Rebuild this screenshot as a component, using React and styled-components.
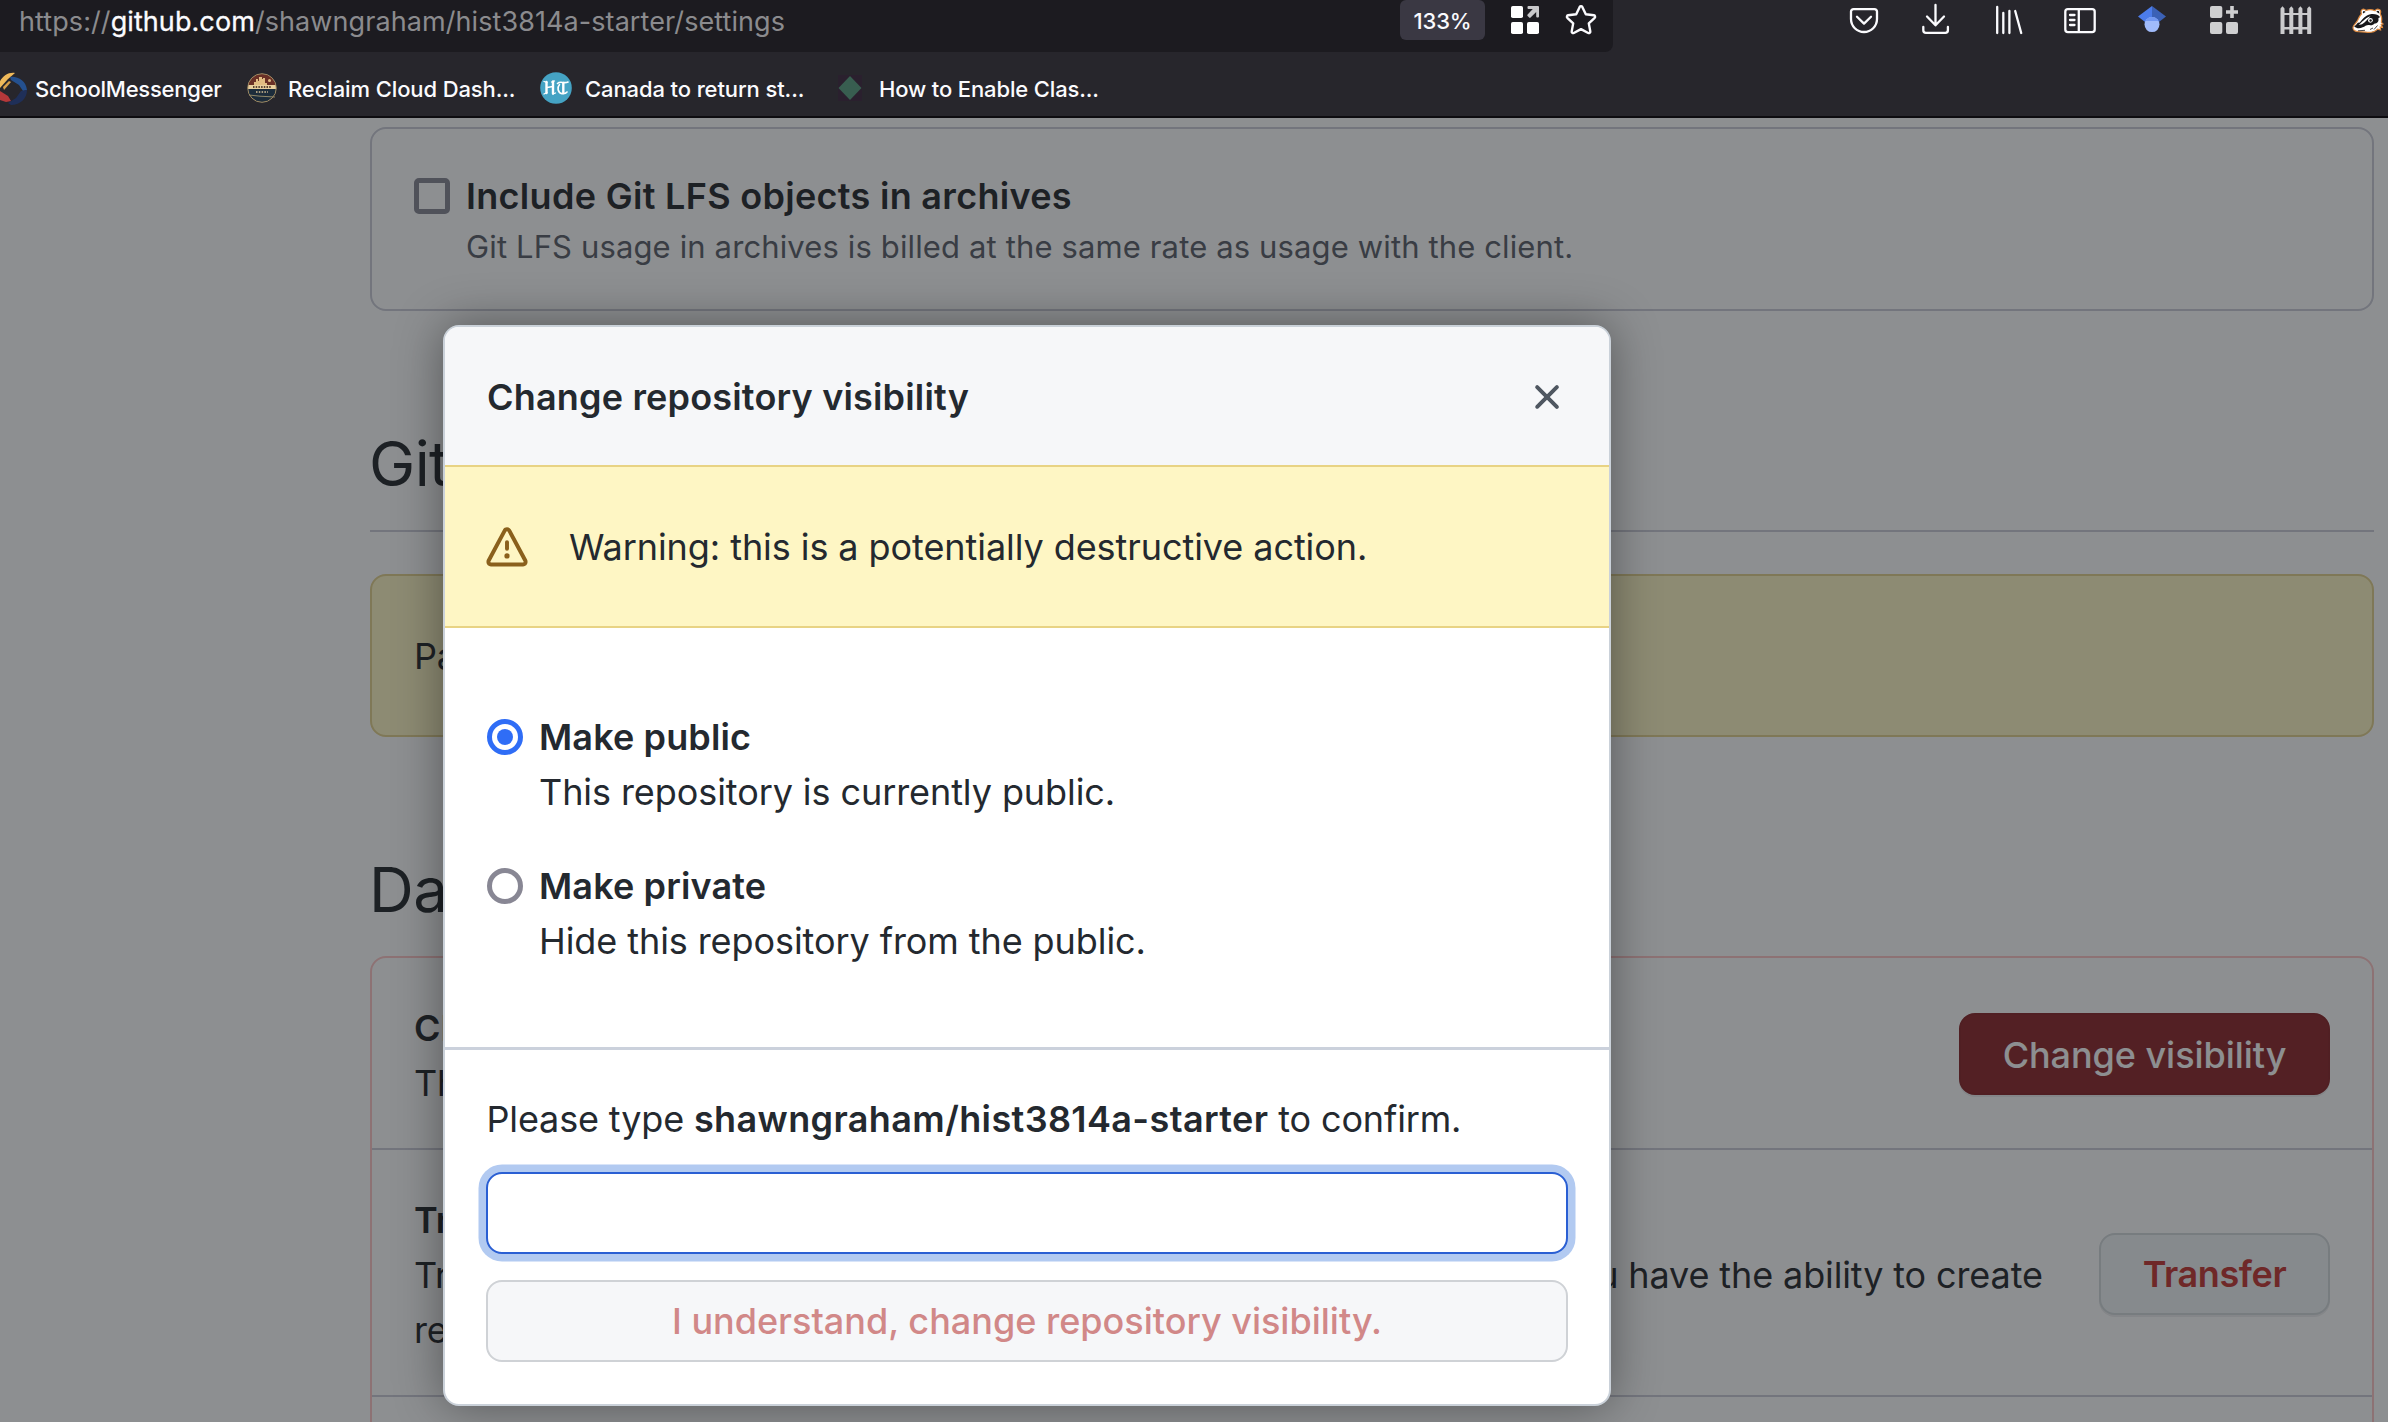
import React from 'react';
import styled, { createGlobalStyle } from 'styled-components';

const GlobalStyle = createGlobalStyle`
  *, *::before, *::after { box-sizing: border-box; }
  html, body { margin: 0; padding: 0; }
  body {
    width: 2388px;
    height: 1422px;
    overflow: hidden;
    background: #fff;
    color: #24292f;
    font-family: Inter, "Liberation Sans", sans-serif;
    font-size: 36px;
    line-height: 55px;
    letter-spacing: -0.1px;
  }
`;

const Window = styled.div`
  display: flex;
  flex-direction: column;
  width: 2388px;
  height: 1422px;
  overflow: hidden;
`;

/* ---------- browser chrome ---------- */

const Chrome = styled.header`
  flex: 0 0 118px;
  display: flex;
  flex-direction: column;
  background: #27262c;
  border-bottom: 2px solid #0d0c10;
  overflow: hidden;
`;

const Toolbar = styled.div`
  flex: 0 0 52px;
  display: flex;
`;

const AddressBar = styled.div`
  flex: 0 0 1613px;
  display: flex;
  align-items: flex-start;
  padding: 0 14px 0 19px;
  background: #1c1b20;
  border-bottom-right-radius: 8px;
`;

const Url = styled.span`
  flex: 1;
  color: #8b8b8e;
  font-size: 27px;
  line-height: 43px;
  letter-spacing: 0.08px;
  white-space: nowrap;
`;

const Domain = styled.span`
  color: #fbfbfe;
  -webkit-text-stroke: 0.3px #fbfbfe;
`;

const ZoomBadge = styled.span`
  width: 85px;
  height: 40px;
  padding-top: 1px;
  border-radius: 6px;
  background: #3a3843;
  color: #fbfbfe;
  font-size: 22px;
  font-weight: 500;
  line-height: 40px;
  text-align: center;
`;

const BarIcon = styled.svg`
  display: block;
  width: 36px;
  height: 40px;
  margin-left: ${(p) => p.$left || 0}px;
`;

const Extensions = styled.div`
  display: flex;
  margin-left: 215px;
`;

const Slot = styled.div`
  flex: 0 0 72px;
  display: flex;
  justify-content: center;
`;

const Bookmarks = styled.nav`
  flex: 1;
  display: grid;
  grid-template-columns: 250px 294px 298px 280px;
  align-items: center;
  margin-left: -4px;
  padding-top: 8px;
`;

const Bookmark = styled.a`
  display: flex;
  align-items: center;
  gap: ${(p) => p.$gap}px;
  color: #fbfbfe;
  font-size: 22px;
  font-weight: 500;
  line-height: 33px;
  letter-spacing: ${(p) => p.$track || -0.11}px;
  white-space: nowrap;
`;

const BookmarkLabel = styled.span`
  padding-top: 2px;
`;

const Favicon = styled.svg`
  flex: none;
  display: block;
`;

/* ---------- settings page ---------- */

const Page = styled.div`
  position: relative;
  flex: 1;
  overflow: hidden;
`;

const Content = styled.main`
  display: flex;
  flex-direction: column;
  margin: 9px 14px 0 370px;
  color: #1f2226;
  letter-spacing: -0.125px;
`;

const OptionBox = styled.section`
  display: flex;
  gap: 16px;
  height: 184px;
  padding: 39px 42px 0;
  border: 2px solid #cacbd6;
  border-radius: 16px;
`;

const Checkbox = styled.input`
  appearance: none;
  flex: none;
  width: 36px;
  height: 36px;
  margin: 10px 0 0;
  border: 5px solid #858491;
  border-radius: 5px;
`;

const OptionTitle = styled.div`
  font-weight: 600;
  line-height: 56px;
  letter-spacing: 0.3px;
`;

const OptionNote = styled.div`
  color: #575a65;
  font-size: 31px;
  line-height: 45px;
  letter-spacing: 0.13px;
`;

const SectionTitle = styled.h2`
  margin: 106px 0 0;
  padding-bottom: 20px;
  border-bottom: ${(p) => (p.$ruled ? '2px solid #cacbd6' : 'none')};
  font-size: 62px;
  font-weight: 400;
  line-height: 93px;
  letter-spacing: -0.6px;
  text-indent: -1px;
`;

const Flash = styled.div`
  margin-top: 42px;
  padding: 53px 42px 51px;
  border: 2px solid #e3d08a;
  border-radius: 16px;
  background: #fef6c2;
`;

const DangerBox = styled.section`
  border: 2px solid #ffc5c4;
  border-radius: 16px;
`;

const DangerRow = styled.div`
  display: flex;
  align-items: center;
  gap: 40px;
  padding: 43px 42px 37px;
  border-bottom: 2px solid #cacbd6;
`;

const DangerText = styled.div`
  flex: 1;
`;

const Strong = styled.strong`
  display: block;
  font-weight: 600;
  letter-spacing: 0.13px;
`;

const RowButton = styled.button`
  flex: none;
  width: ${(p) => p.$width}px;
  height: 82px;
  margin: 0 0 4px;
  padding: 2px 0 0;
  border: 2px solid ${(p) => (p.$primary ? '#851f22' : '#d3d8db')};
  border-radius: 16px;
  background: ${(p) => (p.$primary ? '#8b2124' : '#f0f5f6')};
  box-shadow: 0 2px 0 rgba(27, 31, 36, 0.08);
  color: ${(p) => (p.$primary ? '#fff' : '#c2312d')};
  font: ${(p) => (p.$primary ? 500 : 600)} 36px/55px Inter, "Liberation Sans", sans-serif;
  letter-spacing: ${(p) => (p.$primary ? -0.05 : -0.4)}px;
`;

const Backdrop = styled.div`
  position: absolute;
  inset: 0;
  background: rgba(27, 31, 36, 0.5);
`;

/* ---------- dialog ---------- */

const Dialog = styled.div`
  position: absolute;
  top: 207px;
  left: 443px;
  display: flex;
  flex-direction: column;
  width: 1168px;
  height: 1081px;
  border: 2px solid #cad1d9;
  border-radius: 16px;
  background: #fff;
  box-shadow: 0 0 48px rgba(0, 0, 0, 0.4);
  overflow: hidden;
`;

const DialogHeader = styled.div`
  flex: 0 0 138px;
  display: flex;
  align-items: center;
  justify-content: space-between;
  padding: 2px 41px 0 42px;
  background: #f6f7f9;
`;

const DialogTitle = styled.h3`
  margin: 0;
  font-size: 36px;
  font-weight: 600;
  letter-spacing: 0.18px;
`;

const CloseButton = styled.button`
  display: flex;
  padding: 0;
  border: 0;
  background: none;
  color: #4f5761;
`;

const Octicon = styled.svg`
  flex: none;
  display: block;
  width: 42px;
  height: 42px;
  fill: currentColor;
`;

const Warning = styled.div`
  flex: 0 0 163px;
  display: flex;
  align-items: center;
  gap: 41px;
  padding: 2px 42px 0 41px;
  border: solid #e8d384;
  border-width: 2px 0;
  background: #fef6c4;
  letter-spacing: -0.07px;

  ${Octicon} {
    color: #8a601c;
  }
`;

const Choices = styled.div`
  flex: 1;
  display: flex;
  flex-direction: column;
  gap: 38px;
  padding: 81px 42px 0;
`;

const Choice = styled.label`
  display: flex;
  align-items: flex-start;
  gap: 16px;
`;

const ChoiceText = styled.div`
  padding-top: 1px;
  letter-spacing: -0.08px;
`;

const Radio = styled.input`
  appearance: none;
  flex: none;
  display: grid;
  place-items: center;
  width: 36px;
  height: 36px;
  margin: 10px 0 0;
  border: 5px solid #888794;
  border-radius: 50%;

  &:checked {
    border-color: #2f6df6;
  }
  &:checked::before {
    content: "";
    width: 16px;
    height: 16px;
    border-radius: 50%;
    background: #2f6df6;
  }
`;

const Confirm = styled.form`
  flex: 0 0 357px;
  display: flex;
  flex-direction: column;
  padding: 41px 41px 0;
  border-top: 3px solid #cbd1dc;
`;

const ConfirmLabel = styled.label`
  height: 81px;
  padding-top: 1px;
  text-indent: 0.5px;
  letter-spacing: -0.15px;

  b {
    font-weight: 600;
    letter-spacing: 0.38px;
  }
`;

const ConfirmInput = styled.input`
  height: 82px;
  padding: 0 20px;
  border: 2px solid #2a5fd3;
  border-radius: 16px;
  outline: none;
  background: #fff;
  box-shadow: 0 0 0 7.5px #b2caf1;
  font: 400 36px Inter, "Liberation Sans", sans-serif;
`;

const ConfirmButton = styled.button`
  height: 82px;
  margin-top: 26px;
  padding: 1px 0 0;
  border: 2px solid #cfd2d6;
  border-radius: 16px;
  background: #f6f7f9;
  color: #d18888;
  font: 500 36px/55px Inter, "Liberation Sans", sans-serif;
  letter-spacing: 0;
`;

/* ---------- icons ---------- */

const line = { fill: 'none', stroke: '#fbfbfe', strokeWidth: 2.3, strokeLinecap: 'round', strokeLinejoin: 'round' };

const QrGridIcon = () => (
  <BarIcon $left={22} viewBox="0 0 36 40">
    <rect x="4" y="6" width="12" height="12" rx="1.8" fill="#fff" />
    <rect x="4" y="22" width="12" height="12" rx="1.8" fill="#fff" />
    <rect x="20" y="22" width="12" height="12" rx="1.8" fill="#fff" />
    <path d="M21.500 6H31a1 1 0 0 1 1 1v9.500a1 1 0 0 1-1 1h-.8a1 1 0 0 1-1-1V12l-5.600 5.600a1 1 0 0 1-1.400 0l-1.600-1.600a1 1 0 0 1 0-1.400L25.800 9h-4.300a1 1 0 0 1-1-1V7a1 1 0 0 1 1-1z" fill="#c9c9cb" />
  </BarIcon>
);

const StarIcon = () => (
  <BarIcon $left={20} viewBox="0 0 36 40">
    <path
      {...line}
      strokeWidth="2.4"
      d="M16.7 6.9a1.5 1.5 0 0 1 2.6 0l3.5 7.3 8.1 1.1a1.5 1.5 0 0 1 .8 2.5l-5.9 5.6 1.5 8a1.5 1.5 0 0 1-2.1 1.6L18 29.1 10.8 33a1.5 1.5 0 0 1-2.1-1.6l1.5-8-5.9-5.6a1.5 1.5 0 0 1 .8-2.5l8.1-1.1z"
    />
  </BarIcon>
);

const PocketIcon = () => (
  <BarIcon viewBox="0 0 36 40">
    <path {...line} d="M7.5 9.1h21A2.5 2.5 0 0 1 31 11.6V19a13 13 0 0 1-26 0v-7.4a2.5 2.5 0 0 1 2.5-2.5z" />
    <path {...line} d="M11 16.8l7 6.8 7-6.8" />
  </BarIcon>
);

const DownloadIcon = () => (
  <BarIcon viewBox="0 0 36 40">
    <path {...line} d="M17.5 5v20M9 16.5l8.5 8.8 8.5-8.8" />
    <path {...line} d="M5.3 27v3.3a2.6 2.6 0 0 0 2.6 2.6h19.4a2.6 2.6 0 0 0 2.6-2.6V27" />
  </BarIcon>
);

const LibraryIcon = () => (
  <BarIcon viewBox="0 0 36 40">
    <path {...line} d="M7.2 7v26M13.3 13v20M19.4 11v22M25.2 11l6 22" />
  </BarIcon>
);

const SidebarIcon = () => (
  <BarIcon viewBox="0 0 36 40">
    <rect {...line} x="3.3" y="9.1" width="29.4" height="23" rx="2.6" />
    <path {...line} d="M16.8 9.5v22M8 15h4.5M8 20h4.5M8 25h4.5" />
  </BarIcon>
);

const ScholarIcon = () => (
  <BarIcon viewBox="0 0 36 40">
    <path d="M18 6L4 16.6l8 6.2 6-3.8z" fill="#4c7cea" />
    <path d="M18 6l14 10.6-8 6.2-6-3.8z" fill="#3b61b6" />
    <circle cx="18" cy="24.6" r="7.5" fill="#a0bbfb" />
    <path d="M11.4 21a7.5 7.5 0 0 1 13.2 0z" fill="#7398f1" />
  </BarIcon>
);

const AddTileIcon = () => (
  <BarIcon viewBox="0 0 36 40" fill="#cfcfd1">
    <rect x="4" y="6" width="12.3" height="12" rx="2" />
    <rect x="4" y="22" width="12.3" height="12" rx="2" />
    <rect x="20" y="22" width="12" height="12" rx="2" />
    <path d="M24.2 6h3.6v4.2H32v3.6h-4.2V18h-3.6v-4.2H20v-3.6h4.2z" />
  </BarIcon>
);

const FenceIcon = () => (
  <BarIcon viewBox="0 0 36 40" fill="#cbcbcd">
    <path d="M2.5 34V8.5l2-2.2 2 2.2V34zM11.3 34V8.5l2-2.2 2 2.2V34zM20.4 34V8.5l2-2.2 2 2.2V34zM29.2 34V8.5l2-2.2 2 2.2V34z" />
    <path d="M3 13h30v2H3zM3 27h30v2.4H3z" />
  </BarIcon>
);

const BadgerIcon = () => (
  <BarIcon viewBox="0 0 36 40">
    <path
      d="M11.500 14c-1.500-4 1.500-6.500 4.500-3.500 3-1.200 6-1 9 .2 2.500-3.200 7-1.200 5.200 3.100 1.400 2.400 1.800 5.500 1.200 8.500l1.600 1.600-1.800.6 1.200 3-2.200-.4.4 2.800-3-.8c-3 3-7.500 3.800-12 3l-7-.4c-3.600 0-6-1.800-5.600-4.600 1-2.800 3.600-4.400 5-7.400 1-2.200 1.700-4 3.500-5.700z"
      fill="#fff"
      stroke="#dd8a40"
      strokeWidth="1.200"
    />
    <path d="M13 13.500c-.6-2.600 1-3.400 2.600-1.400zM26.300 11.700c1.600-1.800 3.600-.8 2.800 1.700z" fill="#17171a" />
    <path d="M4.200 26.500c1.400-1 2.600-2.200 3.600-3.800l2-.2c2.600-3.600 5.600-7.200 10.600-8.300 4-.7 8 .4 9.800 3-1.600.2-2.200 1.200-1.600 2.800-.4 2.400-2 3.800-4 3.500-1.400 1.500-3.600 2.300-5.200 1.500-2.800-.4-4.400 1.400-6.800 2.300-2.200 1-5.400 1.800-8.400-.8z" fill="#17171a" />
    <path d="M8.500 25c3.600-2.800 6-6.700 12-8.800-3 3-4.800 5.900-8.500 8z" fill="#fff" />
    <circle cx="20.400" cy="20.300" r="2.400" fill="#fff" />
    <circle cx="20.600" cy="20.500" r="1.200" fill="#17171a" />
    <path d="M24 29.500l3.500-4M20 29.500l3-1.500M8 30.800l7-.5" stroke="#4a4a4e" strokeWidth="1" fill="none" />
  </BarIcon>
);

const SchoolIcon = () => (
  <Favicon width="31" height="33" viewBox="0 0 31 33">
    <path d="M2 14C5 5 11 0 19 1l-7 6-8 9z" fill="#efb95a" />
    <path d="M7 15l6-6 2 1-7 8z" fill="#d99f49" />
    <path d="M14 5c8-1 16 4 17 13l-4 1-4-6-8-5z" fill="#24508f" />
    <path d="M31 18c0 8-6 15-16 15l-3-2 8-5 5-7z" fill="#1f2f58" />
    <path d="M4 19l8 5 3 5-5 1-6-2z" fill="#b5383a" />
  </Favicon>
);

const ReclaimIcon = () => (
  <Favicon width="32" height="32" viewBox="0 0 32 32">
    <circle cx="16" cy="16" r="14.600" fill="#1c2c3b" />
    <path d="M1.700 16a14.300 14.300 0 0 1 28.600 0z" fill="#6a3026" />
    <path d="M8 13v-3h2V7h2v2h1V5h3v2h1V6h2v5h2v2z" fill="#e2bd83" />
    <circle cx="23.500" cy="8.500" r="1.500" fill="#e2bd83" />
    <rect x="2" y="13" width="28" height="4" fill="#e9cf9d" />
    <path d="M7 15h18" stroke="#5b4432" strokeWidth="2" strokeDasharray="1.500 1.200" />
    <path d="M10 20h12" stroke="#a89c80" strokeWidth="1.800" strokeDasharray="1.500 1.300" />
    <path d="M3 23l11 1.200L29 25" stroke="#8f8768" strokeWidth="1" fill="none" />
    <circle cx="16" cy="16" r="14.300" fill="none" stroke="#a08a62" strokeWidth="1" />
  </Favicon>
);

const TimesIcon = () => (
  <Favicon width="32" height="32" viewBox="0 0 32 32">
    <circle cx="16" cy="16" r="15.800" fill="#45a3c4" />
    <g fill="none" stroke="#fff" strokeLinecap="round">
      <path strokeWidth="2.400" d="M6.500 10v11M13 9.500v12" />
      <path strokeWidth="1.300" d="M4 9.500l3 1M4 22l3-1.500M7 15.500l6-1M11.500 10l3-1M13 22l2.500-1" />
      <path strokeWidth="2.400" d="M23.300 11v10" />
      <path strokeWidth="1.600" d="M17.500 11.500c3-3 6 .5 10.500-1.500M19.500 12.500c-2.500 3-2 8 2.500 9.200 2 .2 4-.2 5-1.700" />
    </g>
  </Favicon>
);

const DiamondIcon = () => (
  <Favicon width="24" height="26" viewBox="0 0 24 26">
    <rect width="24" height="26" fill="#2a202e" />
    <path d="M12 1l11.500 12L12 25 .5 13z" fill="#385e50" />
  </Favicon>
);

const AlertIcon = () => (
  <Octicon viewBox="0 0 16 16">
    <path
      fillRule="evenodd"
      d="M8.220 1.754a.25.25 0 00-.44 0L1.698 13.132a.25.25 0 00.22.368h12.164a.25.25 0 00.22-.368L8.220 1.754zm-1.763-.707c.659-1.234 2.427-1.234 3.086 0l6.082 11.378A1.750 1.750 0 0114.082 15H1.918a1.750 1.750 0 01-1.543-2.575L6.457 1.047zM9 11a1 1 0 11-2 0 1 1 0 012 0zm-.25-5.250a.75.75 0 00-1.500 0v2.500a.75.75 0 001.500 0v-2.500z"
    />
  </Octicon>
);

const CloseIcon = () => (
  <Octicon viewBox="0 0 16 16">
    <path d="M3.720 3.720a.75.75 0 011.060 0L8 6.940l3.220-3.220a.75.75 0 111.060 1.060L9.060 8l3.220 3.220a.75.75 0 11-1.060 1.060L8 9.060l-3.220 3.220a.75.75 0 01-1.060-1.060L6.940 8 3.720 4.780a.75.75 0 010-1.060z" />
  </Octicon>
);

const extensionIcons = [PocketIcon, DownloadIcon, LibraryIcon, SidebarIcon, ScholarIcon, AddTileIcon, FenceIcon, BadgerIcon];

const bookmarks = [
  { Icon: SchoolIcon, label: 'SchoolMessenger', gap: 8, track: -0.24 },
  { Icon: ReclaimIcon, label: 'Reclaim Cloud Dash...', gap: 10 },
  { Icon: TimesIcon, label: 'Canada to return st...', gap: 13 },
  { Icon: DiamondIcon, label: 'How to Enable Clas...', gap: 17, track: -0.14 },
];

const choices = [
  { value: 'public', label: 'Make public', note: 'This repository is currently public.' },
  { value: 'private', label: 'Make private', note: 'Hide this repository from the public.' },
];

export default function App() {
  return (
    <Window>
      <GlobalStyle />
      <Chrome>
        <Toolbar>
          <AddressBar>
            <Url>
              https://<Domain>github.com</Domain>/shawngraham/hist3814a-starter/settings
            </Url>
            <ZoomBadge>133%</ZoomBadge>
            <QrGridIcon />
            <StarIcon />
          </AddressBar>
          <Extensions>
            {extensionIcons.map((Icon, i) => (
              <Slot key={i}>
                <Icon />
              </Slot>
            ))}
          </Extensions>
        </Toolbar>
        <Bookmarks>
          {bookmarks.map(({ Icon, label, gap, track }) => (
            <Bookmark key={label} $gap={gap} $track={track}>
              <Icon />
              <BookmarkLabel>{label}</BookmarkLabel>
            </Bookmark>
          ))}
        </Bookmarks>
      </Chrome>

      <Page>
        <Content>
          <OptionBox>
            <Checkbox type="checkbox" />
            <div>
              <OptionTitle>Include Git LFS objects in archives</OptionTitle>
              <OptionNote>Git LFS usage in archives is billed at the same rate as usage with the client.</OptionNote>
            </div>
          </OptionBox>

          <SectionTitle $ruled>GitHub Pages</SectionTitle>
          <Flash>Pages settings now has its own dedicated tab!</Flash>

          <SectionTitle>Danger Zone</SectionTitle>
          <DangerBox>
            <DangerRow>
              <DangerText>
                <Strong>Change repository visibility</Strong>
                This repository is currently public.
              </DangerText>
              <RowButton $primary $width={371}>Change visibility</RowButton>
            </DangerRow>
            <DangerRow>
              <DangerText>
                <Strong>Transfer ownership</Strong>
                Transfer this repository to another user or to an organization where you have the ability to create
                repositories.
              </DangerText>
              <RowButton $width={231}>Transfer</RowButton>
            </DangerRow>
            <DangerRow />
          </DangerBox>
        </Content>

        <Backdrop />

        <Dialog role="dialog">
          <DialogHeader>
            <DialogTitle>Change repository visibility</DialogTitle>
            <CloseButton type="button">
              <CloseIcon />
            </CloseButton>
          </DialogHeader>
          <Warning>
            <AlertIcon />
            Warning: this is a potentially destructive action.
          </Warning>
          <Choices>
            {choices.map(({ value, label, note }) => (
              <Choice key={value}>
                <Radio type="radio" name="visibility" value={value} defaultChecked={value === 'public'} />
                <ChoiceText>
                  <Strong>{label}</Strong>
                  {note}
                </ChoiceText>
              </Choice>
            ))}
          </Choices>
          <Confirm>
            <ConfirmLabel>
              Please type <b>shawngraham/hist3814a-starter</b> to confirm.
            </ConfirmLabel>
            <ConfirmInput type="text" />
            <ConfirmButton type="button">I understand, change repository visibility.</ConfirmButton>
          </Confirm>
        </Dialog>
      </Page>
    </Window>
  );
}
